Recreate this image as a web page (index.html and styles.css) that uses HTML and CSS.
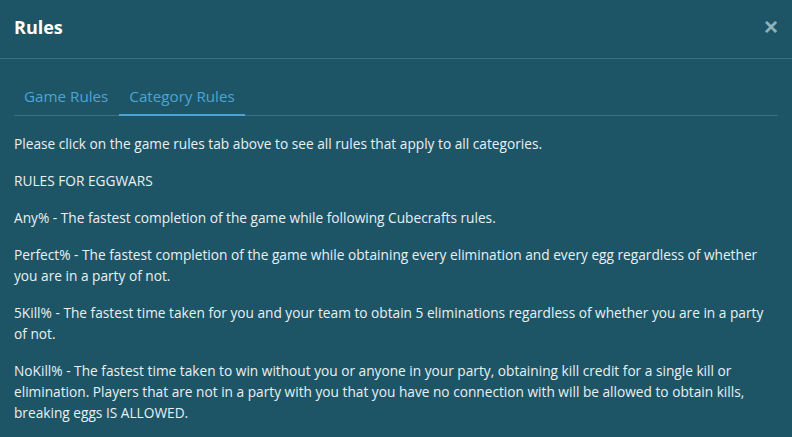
FILE: index.html
```html
<!DOCTYPE html>
<html lang="en">
<head>
    <meta charset="UTF-8">
    <meta name="viewport" content="width=device-width, initial-scale=1.0">
    <title>Rules</title>
    <link rel="stylesheet" href="styles.css">
</head>
<body>
    <div class="modal">
        <div class="modal-header">
            <h2 class="modal-title">Rules</h2>
            <button class="close" type="button" aria-label="Close">&times;</button>
        </div>
        <div class="modal-body">
            <ul class="tabs">
                <li class="tab">Game Rules</li>
                <li class="tab active">Category Rules</li>
            </ul>
            <div class="tab-content">
                <p>Please click on the game rules tab above to see all rules that apply to all categories.</p>
                <p>RULES FOR EGGWARS</p>
                <p>Any% - The fastest completion of the game while following Cubecrafts rules.</p>
                <p>Perfect% - The fastest completion of the game while obtaining every elimination and every egg regardless of whether you are in a party of not.</p>
                <p>5Kill% - The fastest time taken for you and your team to obtain 5 eliminations regardless of whether you are in a party of not.</p>
                <p>NoKill% - The fastest time taken to win without you or anyone in your party, obtaining kill credit for a single kill or elimination. Players that are not in a party with you that you have no connection with will be allowed to obtain kills, breaking eggs IS ALLOWED.</p>
            </div>
        </div>
    </div>
</body>
</html>
```

FILE: styles.css
```css
body {
    margin: 0;
    background-color: #1d5566;
    font-family: "Open Sans", "Noto Sans", sans-serif;
    color: #eaf0f2;
}
.modal {
    background-color: #1d5566;
}
.modal-header {
    display: flex;
    align-items: center;
    justify-content: space-between;
    height: 58px;
    padding: 0 14px;
    border-bottom: 1px solid #3b7080;
}
.modal-title {
    margin: -5px 0 0;
    font-size: 18px;
    font-weight: 700;
    color: #ffffff;
}
.close {
    background: none;
    border: none;
    padding: 0;
    margin-top: -4px;
    font-family: Arial, sans-serif;
    font-size: 24px;
    font-weight: 700;
    line-height: 1;
    color: #8db3bd;
    cursor: pointer;
}
.modal-body {
    padding: 20px 14px 0;
}
.tabs {
    display: flex;
    list-style: none;
    margin: 0 0 17px;
    padding: 0;
    border-bottom: 1px solid #3b7080;
}
.tab {
    padding: 6px 10px 7px;
    font-size: 15.2px;
    line-height: 22px;
    color: #4ba4d8;
    border-bottom: 2px solid transparent;
    margin-bottom: -1px;
    margin-right: 1px;
}
.tab.active {
    border-bottom-color: #4ba4d8;
}
.tab-content p {
    margin: 0 0 16px;
    font-size: 13.7px;
    line-height: 21px;
}
```
